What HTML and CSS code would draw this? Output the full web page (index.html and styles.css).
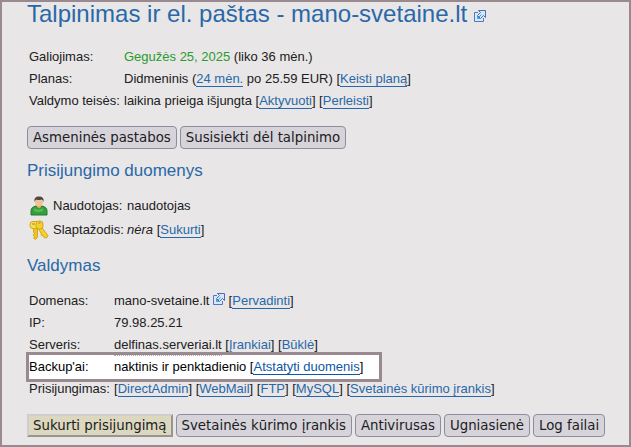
FILE: index.html
```
<!DOCTYPE html>
<html lang="lt">
  <head>
    <meta charset="UTF-8" />
    <title>Talpinimas ir el. paštas</title>
    <link rel="stylesheet" href="styles.css">
  </head>
  <body>
    <svg class="symbols" aria-hidden="true">
      <symbol id="external" viewBox="0 0 12 12">
        <path d="M4 2.500H.5v9h9V8" fill="#dce8f7" stroke="#5378bd" />
        <path d="M4.500.5h7v7L9.500 5.500 6.500 8.500 3.500 5.500 6.500 2.500z" fill="#d5e6f8" stroke="#4a6db5" />
        <path d="M3.500 5v3.500H7M3.500 8.500l4-4" fill="none" stroke="#3fa4df" />
      </symbol>
    </svg>
    <main class="panel">
      <h1>Talpinimas ir el. paštas - mano-svetaine.lt
        <a class="external" href="#" aria-label="Atidaryti svetainę"><svg><use href="#external" /></svg></a>
      </h1>

      <table class="info plan">
        <tr>
          <th>Galiojimas:</th>
          <td><span class="active">Gegužės 25, 2025</span> (liko 36 mėn.)</td>
        </tr>
        <tr>
          <th>Planas:</th>
          <td>Didmeninis (<a href="#">24 mėn.</a> po 25.59 EUR) [<a href="#">Keisti planą</a>]</td>
        </tr>
        <tr>
          <th>Valdymo teisės:</th>
          <td>laikina prieiga išjungta [<a href="#">Aktyvuoti</a>] [<a href="#">Perleisti</a>]</td>
        </tr>
      </table>

      <div class="buttons">
        <button type="button">Asmeninės pastabos</button>
        <button type="button">Susisiekti dėl talpinimo</button>
      </div>

      <h2>Prisijungimo duomenys</h2>
      <table class="info login">
        <tr>
          <td class="icon">
            <svg class="user" viewBox="0 0 20 20">
              <path d="M2 19v-4q0-4 5-5h6q5 1 5 5v4z" fill="#34a03d" stroke="#237a2c" />
              <path d="M5 12q5 3 9 0v3q-5 2-9 0z" fill="#5cb855" />
              <path d="M8 9h4v2q-2 2-4 0z" fill="#e6a36d" />
              <ellipse cx="10" cy="6" rx="4" ry="4.500" fill="#f1c294" />
              <path d="M5.500 6Q4.500.5 10 .5T14.500 6q-.5-2.500-2-2.500-3 1-5 0-1.500.5-2 2.500z" fill="#4b4743" />
            </svg>
          </td>
          <th>Naudotojas:</th>
          <td>naudotojas</td>
        </tr>
        <tr>
          <td class="icon">
            <svg class="keys" viewBox="0 0 20 20">
              <path d="M4.500 7h4v10l-2 2.500-2-1.500 1-1.500-1.500-1.500 1.500-1.500-1-1.500z" fill="#edc51f" stroke="#d2a71c" />
              <path d="M9 8l3-1.500 7 9-1 2-2.500.5-1-2-2-.5-.5-2.500z" fill="#f3d02e" stroke="#d2a71c" />
              <rect x="1" y="1.500" width="9" height="7" rx="3" fill="#f8de50" stroke="#d2a71c" />
              <rect x="7" y="1" width="7" height="8" rx="3" fill="#f3d02e" stroke="#d2a71c" />
              <path d="M3 4h3M9.500 3h2" stroke="#a78631" />
            </svg>
          </td>
          <th>Slaptažodis:</th>
          <td><em>nėra</em> [<a href="#">Sukurti</a>]</td>
        </tr>
      </table>

      <h2>Valdymas</h2>
      <table class="info control">
        <tr>
          <th>Domenas:</th>
          <td>mano-svetaine.lt <a class="external" href="#" aria-label="Atidaryti svetainę"><svg><use href="#external" /></svg></a> [<a href="#">Pervadinti</a>]</td>
        </tr>
        <tr>
          <th>IP:</th>
          <td>79.98.25.21</td>
        </tr>
        <tr>
          <th>Serveris:</th>
          <td><span class="server">delfinas.serveriai.lt</span> [<a href="#">Įrankiai</a>] [<a href="#">Būklė</a>]</td>
        </tr>
        <tr class="highlight">
          <th>Backup'ai:</th>
          <td>naktinis ir penktadienio [<a href="#">Atstatyti duomenis</a>]</td>
        </tr>
        <tr>
          <th>Prisijungimas:</th>
          <td>[<a href="#">DirectAdmin</a>] [<a href="#">WebMail</a>] [<a href="#">FTP</a>] [<a href="#">MySQL</a>] [<a href="#">Svetainės kūrimo įrankis</a>]</td>
        </tr>
      </table>

      <div class="buttons">
        <button type="button" class="primary">Sukurti prisijungimą</button>
        <button type="button">Svetainės kūrimo įrankis</button>
        <button type="button">Antivirusas</button>
        <button type="button">Ugniasienė</button>
        <button type="button">Log failai</button>
      </div>
    </main>
  </body>
</html>
```

FILE: styles.css
```
*,
*::before {
  box-sizing: border-box;
}

body {
  margin: 0;
  background: #e8e6e7;
  color: #202020;
  font-family: "Liberation Sans", Arial, sans-serif;
  font-size: 13px;
}

.symbols {
  display: none;
}

.panel {
  min-height: 100vh;
  padding: 0 20px 7px 25px;
  border: 2px solid #998a8f;
}

h1,
h2 {
  margin: 0;
  color: #2968a8;
  font-weight: normal;
}

h1 {
  font-size: 24px;
  line-height: 24px;
}

h2 {
  margin: 11px 0;
  font-size: 17px;
  line-height: 22px;
}

a {
  color: #2968a8;
  text-decoration: none;
  border-bottom: 1px solid #2968a8;
}

.external {
  border: 0;
}

.external svg {
  width: 12px;
  height: 12px;
}

.info {
  border-spacing: 2px;
}

.info th,
.info td {
  height: 20px;
  padding: 0;
  line-height: 16px;
  font-weight: normal;
  text-align: left;
  white-space: nowrap;
}

.plan {
  margin: 19px 0 13px;
}

.plan th {
  min-width: 93px;
}

.active {
  color: #2a9b2e;
}

.login {
  margin-bottom: 12px;
}

.login .icon {
  width: 22px;
}

.login th {
  min-width: 72px;
}

.login td,
.login th {
  height: 22px;
}

.icon svg {
  display: block;
  width: 20px;
  height: 20px;
}

.control {
  margin: 12px 0 13px;
}

.control th {
  min-width: 83px;
}

.server {
  position: relative;
  z-index: 3;
  padding-bottom: 3px;
  border-bottom: 1px dotted #aaa;
}

.highlight th,
.highlight td {
  position: relative;
  z-index: 2;
  color: #000;
}

.highlight th {
  z-index: 1;
}

/* white frame that lies over the neighbouring rows */
.highlight th::before {
  content: "";
  position: absolute;
  z-index: -1;
  top: -5px;
  left: -3px;
  width: 356px;
  height: 30px;
  border: 3px solid #998a8f;
  background: #fff;
}

.highlight a {
  color: #0b57a4;
  border-color: #0b57a4;
}

.buttons {
  display: flex;
  flex-wrap: wrap;
  gap: 3px;
}

button {
  height: 23px;
  padding: 0 5px;
  border: 1px solid #8f8d99;
  border-radius: 4px;
  background: #d6d4da;
  color: #202020;
  font-family: "DejaVu Sans", sans-serif;
  line-height: 20px;
}

.primary {
  padding: 0 4px;
  border: 2px solid;
  border-color: #cfcecf #96958f #96958f #cfcecf;
  border-radius: 0;
  background: #dbd8bf;
}
```
